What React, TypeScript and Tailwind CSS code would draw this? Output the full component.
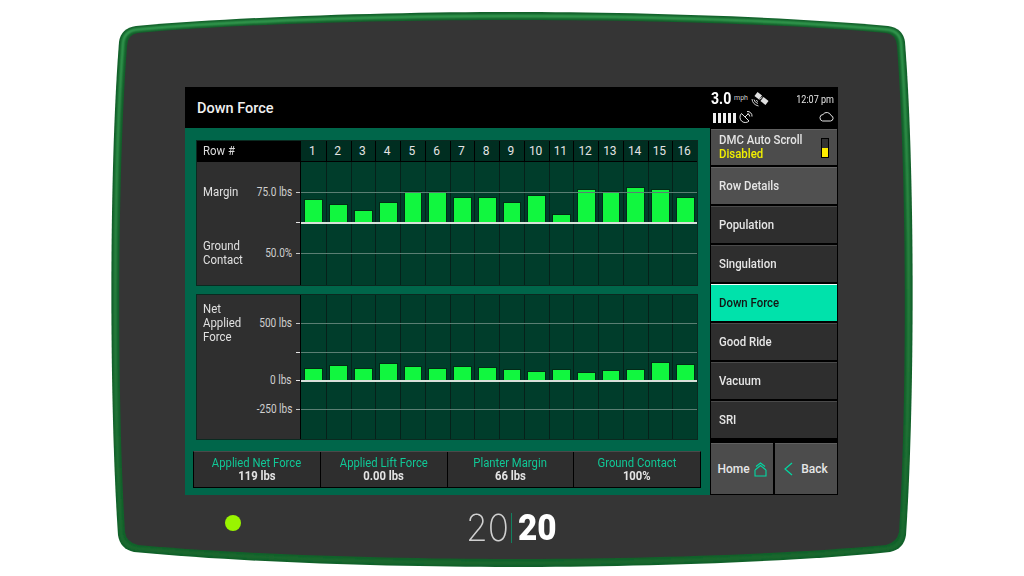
import React from "react";

const m1 = [23, 18, 12, 20, 31, 31, 25, 25, 20, 27, 8, 33, 31, 35, 33, 25];
const m2 = [12, 15, 12, 17, 14, 12, 14, 13, 11, 9, 11, 8, 10, 11, 18, 16];

function Bezel() {
  return (
    <svg className="absolute inset-0" width="1024" height="576" viewBox="0 0 1024 576">
      <defs>
        <linearGradient id="g" x1="0" y1="0" x2="0" y2="1">
          <stop offset="0" stopColor="#3aa656" />
          <stop offset="0.6" stopColor="#2a8040" />
          <stop offset="1" stopColor="#1a6a2e" />
        </linearGradient>
        <filter id="b" x="-5%" y="-5%" width="110%" height="110%">
          <feGaussianBlur stdDeviation="0.9" />
        </filter>
      </defs>
      <path
        d="M136 26 C250 16 400 12 512 12 C624 12 780 16 888 26 Q903 28 905 42 C915 170 915 400 906 535 Q904 549 890 552 C780 563 624 567 512 567 C400 567 250 563 134 552 Q120 549 118 535 C109 400 109 170 119 42 Q121 28 136 26 Z"
        fill="#12602a"
      />
      <path
        d="M137 29.5 C250 19.5 400 16 512 16 C624 16 780 19.5 887 29.5 Q900 31 901 43 C911 175 911 400 902.500 534 Q901 546 888 548.500 C780 559 624 563 512 563 C400 563 250 559 136 548.500 Q123 546 121 534 C113 400 113 175 123 43 Q124 31 137 29.500 Z"
        fill="none"
        stroke="url(#g)"
        strokeWidth="2.5"
        filter="url(#b)"
      />
      <path
        d="M138 33 C250 23 400 20 512 20 C624 20 780 23 886 33 Q896 34 897 46 C907 180 907 400 899 532 Q897 542 886 545 C780 555 624 559 512 559 C400 559 250 555 138 545 Q126 542 125 532 C117 400 117 180 127 46 Q128 34 138 33 Z"
        fill="#353535"
      />
    </svg>
  );
}

function Tick({ y, label, strong }: { y: number; label?: string; strong?: boolean }) {
  return (
    <>
      {label && (
        <span
          className="absolute right-[8px] -translate-y-1/2 scale-x-[.84] origin-right whitespace-nowrap text-[12px] leading-none text-[#d0d0d0]"
          style={{ top: y }}
        >
          {label}
        </span>
      )}
      <span className={`absolute right-0 w-[4px] h-[1px] ${strong ? "bg-[#e6e6e6]" : "bg-[#c8c8c8]"}`} style={{ top: y }} />
    </>
  );
}

function GridLine({ y, strong }: { y: number; strong?: boolean }) {
  return (
    <span
      className={`absolute left-0 right-0 z-10 ${strong ? "h-[2px] bg-[#d8e0da]" : "h-[1px] bg-[#5a7f73]"}`}
      style={{ top: y }}
    />
  );
}

function Columns({ data, base }: { data: number[]; base: number }) {
  return (
    <div className="absolute inset-0 grid grid-cols-[repeat(16,1fr)]">
      {data.map((h, i) => (
        <div key={i} className="relative border-l border-[#06211a] first:border-l-0 bg-[#003d2b]">
          <div
            className="absolute left-[2.5px] right-[2.5px] bg-[#11f73f] border border-[#032a18] border-b-0"
            style={{ top: base - h, height: h }}
          />
        </div>
      ))}
    </div>
  );
}

function Squeezed({ children }: { children: React.ReactNode }) {
  return <span className="block scale-x-[.95] origin-left whitespace-nowrap">{children}</span>;
}

function SideButton({ label, active, light }: { label: string; active?: boolean; light?: boolean }) {
  const bg = active
    ? "bg-[#00e2ab] text-[#141414] border-t border-[#f2fffb]"
    : light
      ? "bg-[#505050] text-[#e6e6e6] border-t border-[#666666]"
      : "bg-[#2e2e2e] text-[#e6e6e6] border-t border-[#4a4a4a]";
  return (
    <div className={`h-[37px] shrink-0 mx-[1px] mb-[2px] pl-[8px] flex items-center text-[12px] font-medium ${bg}`}>
      <Squeezed>{label}</Squeezed>
    </div>
  );
}

function Stat({ title, value, last }: { title: string; value: string; last?: boolean }) {
  return (
    <div className={`flex-1 flex flex-col items-center justify-center pt-[1px] ${last ? "" : "border-r border-black"}`}>
      <span className="scale-x-[.94] whitespace-nowrap text-[12px] leading-[13px] text-[#10c896]">{title}</span>
      <span className="scale-x-[.94] whitespace-nowrap text-[12px] leading-[13px] font-bold text-[#e4e4e4]">{value}</span>
    </div>
  );
}

export default function App() {
  return (
    <div className="relative w-[1024px] h-[576px] overflow-hidden bg-white font-['Roboto',sans-serif]">
      <Bezel />
      <div className="relative pl-[185px] pt-[87px]">
        {/* screen */}
        <div className="w-[653px] h-[408px] flex flex-col bg-black">
          <div className="h-[41px] flex bg-black text-white">
            <div className="flex-1 pl-[12px] pt-[12px] text-[14.5px] leading-[20px] font-medium text-[#f0f0f0]">Down Force</div>
            <div className="w-[128px] relative">
              <span className="absolute left-[1px] top-[3px] scale-x-[.88] origin-left text-[16px] leading-[18px] font-bold">3.0</span>
              <span className="absolute left-[24px] top-[6px] text-[7px] leading-[10px] text-[#ccc]">mph</span>
              <svg className="absolute left-[40px] top-[3px]" width="20" height="20" viewBox="0 0 20 20" fill="none">
                <path d="M6 4 L10.500 7.500 M12 9 L17 13" stroke="#e0e0e0" strokeWidth="5" />
                <path d="M9.500 9.500 L12.500 7" stroke="#e0e0e0" strokeWidth="1" />
                <path d="M2 9 Q2.500 14.500 8.500 16 M4 9.500 Q4.500 12.500 8 13.500 M6 10 Q6.500 11 8 11.500" stroke="#d0d0d0" strokeWidth="1" />
              </svg>
              <span className="absolute right-[4px] top-[6px] scale-x-[.82] origin-right whitespace-nowrap text-[11px] leading-[14px] text-[#e4e4e4]">
                12:07 pm
              </span>
              <div className="absolute left-[3px] top-[26px] flex gap-[2px]">
                {[0, 1, 2, 3, 4].map((i) => (
                  <span key={i} className="w-[3px] h-[10px] bg-[#eee]" />
                ))}
              </div>
              <svg className="absolute left-[29px] top-[24px]" width="14" height="13" viewBox="0 0 14 13" fill="none" stroke="#e4e4e4" strokeWidth="1">
                <path d="M2.500 2.500 A5.200 5.200 0 1 0 10 10 Z" />
                <path d="M6 6 L9.500 2.500" />
                <path d="M8 0.500 A4.500 4.500 0 0 1 13 5.500 M8 3 A2.500 2.500 0 0 1 10.800 5.500" />
              </svg>
              <svg className="absolute left-[109px] top-[24px]" width="15" height="11" viewBox="0 0 15 11" fill="none" stroke="#e4e4e4" strokeWidth="1">
                <path d="M3.500 10 H11.500 A2.800 2.800 0 0 0 12 4.500 A4.500 4.500 0 0 0 4 3.500 A3.300 3.300 0 0 0 3.500 10 Z" />
              </svg>
            </div>
          </div>
          <div className="flex-1 flex">
            {/* main */}
            <div className="w-[525px] bg-[#00664a] flex flex-col pt-[12px]">
              <div className="mx-[11px] w-[502px] h-[146px] border border-[#0a2a20] flex flex-col bg-[#2f2f2f]">
                <div className="flex h-[21px]">
                  <div className="w-[104px] bg-black pl-[6px] text-[12px] leading-[20px] text-[#ddd]">
                    <Squeezed>Row #</Squeezed>
                  </div>
                  <div className="flex-1 grid grid-cols-[repeat(16,1fr)] bg-[#002e21] border-b border-black">
                    {m1.map((_, i) => (
                      <div key={i} className="flex items-center justify-center pr-[2px] text-[12px] text-[#e4e4e4] border-l border-black first:border-l-0">
                        {i + 1}
                      </div>
                    ))}
                  </div>
                </div>
                <div className="flex-1 flex">
                  <div className="relative w-[104px] border-r border-black text-[12px] leading-[14px] text-[#e0e0e0]">
                    <div className="pl-[6px] pt-[23px]">
                      <Squeezed>Margin</Squeezed>
                    </div>
                    <div className="pl-[6px] pt-[40px]">
                      <Squeezed>Ground</Squeezed>
                      <Squeezed>Contact</Squeezed>
                    </div>
                    <Tick y={30} label="75.0 lbs" />
                    <Tick y={60} strong />
                    <Tick y={91} label="50.0%" />
                  </div>
                  <div className="relative flex-1">
                    <Columns data={m1} base={60} />
                    <GridLine y={30} />
                    <GridLine y={60} strong />
                    <GridLine y={91} />
                  </div>
                </div>
              </div>
              <div className="mx-[11px] mt-[8px] w-[502px] h-[146px] border border-[#0a2a20] flex bg-[#2f2f2f]">
                <div className="relative w-[104px] border-r border-black text-[12px] leading-[14px] text-[#e0e0e0] pl-[6px] pt-[7px]">
                  <Squeezed>Net</Squeezed>
                  <Squeezed>Applied</Squeezed>
                  <Squeezed>Force</Squeezed>
                  <Tick y={28} label="500 lbs" />
                  <Tick y={57} strong />
                  <Tick y={85} label="0 lbs" strong />
                  <Tick y={114} label="-250 lbs" />
                </div>
                <div className="relative flex-1">
                  <Columns data={m2} base={85} />
                  <GridLine y={28} />
                  <GridLine y={57} />
                  <GridLine y={85} strong />
                  <GridLine y={114} />
                </div>
              </div>
              <div className="mx-[8px] mt-[11px] w-[508px] h-[37px] flex border border-black border-t-[#4a4a4a] bg-[#2e2e2e]">
                <Stat title="Applied Net Force" value="119 lbs" />
                <Stat title="Applied Lift Force" value="0.00 lbs" />
                <Stat title="Planter Margin" value="66 lbs" />
                <Stat title="Ground Contact" value="100%" last />
              </div>
            </div>
            {/* side */}
            <div className="flex-1 flex flex-col pt-[1px] bg-black">
              <div className="h-[36px] shrink-0 mx-[1px] mb-[2px] pl-[8px] pr-[8px] pb-[2px] flex items-center justify-between bg-[#4c4c4c] border-t border-[#606060] text-[12px] leading-[14px] font-medium">
                <div>
                  <div className="text-[#e4e4e4]">
                    <Squeezed>DMC Auto Scroll</Squeezed>
                  </div>
                  <div className="text-[#f2f000]">
                    <Squeezed>Disabled</Squeezed>
                  </div>
                </div>
                <div className="w-[8px] h-[20px] mt-[2px] border border-black bg-[#333] flex flex-col justify-end">
                  <div className="h-[9px] bg-[#ffee00]" />
                </div>
              </div>
              <SideButton label="Row Details" light />
              <SideButton label="Population" />
              <SideButton label="Singulation" />
              <SideButton label="Down Force" active />
              <SideButton label="Good Ride" />
              <SideButton label="Vacuum" />
              <SideButton label="SRI" />
              <div className="mt-[3px] flex gap-[2px] mx-[1px] h-[51px] text-[12px] font-medium text-[#e6e6e6]">
                <div className="flex-1 bg-[#4c4c4c] border-t border-[#606060] flex items-center justify-center gap-[4px]">
                  Home
                  <svg width="13" height="15" viewBox="0 0 13 15" fill="none" stroke="#00d9a3" strokeWidth="1.1">
                    <path d="M1 8 L6.500 3.500 L12 8 M1 8 V14 H12 V8 M2 4.500 L6.500 1 L11 4.500" />
                  </svg>
                </div>
                <div className="flex-1 bg-[#4c4c4c] border-t border-[#606060] flex items-center justify-center gap-[8px]">
                  <svg width="9" height="14" viewBox="0 0 9 14" fill="none" stroke="#00d9a3" strokeWidth="1.2">
                    <path d="M8 1 L1 7 L8 13" />
                  </svg>
                  Back
                </div>
              </div>
            </div>
          </div>
        </div>
        {/* bottom */}
        <div className="flex items-center h-[56px]">
          <span className="ml-[40px] w-[16px] h-[16px] rounded-full bg-[#99f400]" />
          <div className="ml-[225px] mt-[9px] flex items-center text-[37px] leading-none">
            <span className="w-[39px] font-['Inter',sans-serif] font-[200] text-[#d0d0d0] scale-x-[.95] origin-left">20</span>
            <span className="ml-[6px] mr-[6px] w-[1px] h-[30px] bg-[#12805f]" />
            <span className="font-['Roboto',sans-serif] font-[900] text-white scale-x-[.9] origin-left">20</span>
          </div>
        </div>
      </div>
    </div>
  );
}
